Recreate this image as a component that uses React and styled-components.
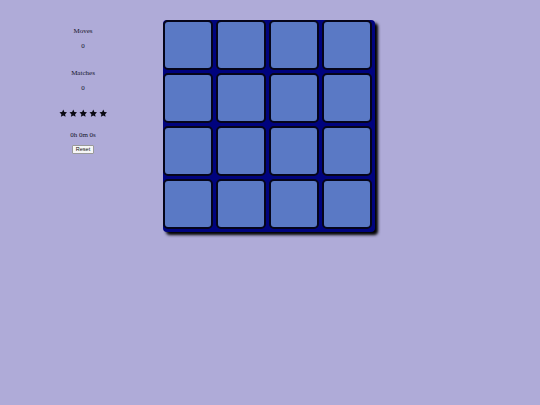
import React from 'react'
import styled, { createGlobalStyle } from 'styled-components'

const GlobalStyle = createGlobalStyle`
body {
  margin: 0;
  background: #afabd8;
  font-family: "Liberation Serif", "Times New Roman", serif;
  color: #16162a;
}
`

const Page = styled.div`
display: flex;
align-items: flex-start;
padding-left: 8px;
min-height: 405px;
`

const Panel = styled.div`
width: 150px;
display: flex;
flex-direction: column;
align-items: center;
padding-top: 27px;
`

const Label = styled.p`
margin: ${p => p.$gap || 0}px 0 0;
font-size: 7px;
line-height: 8px;
`

const Value = styled.p`
margin: 7px 0 0;
font-size: 7px;
line-height: 8px;
`

const Stars = styled.div`
display: flex;
gap: 1.5px;
margin-top: 17px;
`

const Timer = styled.p`
margin: 13px 0 0;
font-size: 7px;
line-height: 8px;
`

const ResetButton = styled.button`
margin-top: 6px;
padding: 0 3px;
height: 9px;
font-family: "Liberation Sans", Arial, sans-serif;
font-size: 5.5px;
line-height: 7px;
background: #f6f6f6;
border: 1px solid #9a9a9a;
border-radius: 1px;
color: #111;
`

const Board = styled.div`
margin: 20px 0 0 5px;
display: grid;
grid-template-columns: repeat(4, 50px);
grid-auto-rows: 50px;
gap: 3px;
padding: 0 3px 3px 0;
background: #00037e;
border-radius: 4px;
box-shadow: 3px 3px 3px #000;
`

const Card = styled.div`
box-sizing: border-box;
background: #5a79c5;
border: 2px solid #05051a;
border-radius: 5px;
`

const Star = () => (
  <svg width="8.5" height="8.5" viewBox="0 0 24 24">
    <path d="M12 1.5l3.2 6.9 7.5.9-5.5 5.2 1.4 7.5L12 18.3 5.4 22l1.4-7.5L1.3 9.3l7.5-.9z" fill="#0a0a12" />
  </svg>
)

const App = () => {
  const cards = Array.from({ length: 16 })
  return (
    <Page>
      <GlobalStyle />
      <Panel>
        <Label>Moves</Label>
        <Value>0</Value>
        <Label $gap={19}>Matches</Label>
        <Value>0</Value>
        <Stars>
          {[0, 1, 2, 3, 4].map(i => <Star key={i} />)}
        </Stars>
        <Timer>0h 0m 0s</Timer>
        <ResetButton>Reset</ResetButton>
      </Panel>
      <Board>
        {cards.map((_, i) => <Card key={i} />)}
      </Board>
    </Page>
  )
}

export default App
